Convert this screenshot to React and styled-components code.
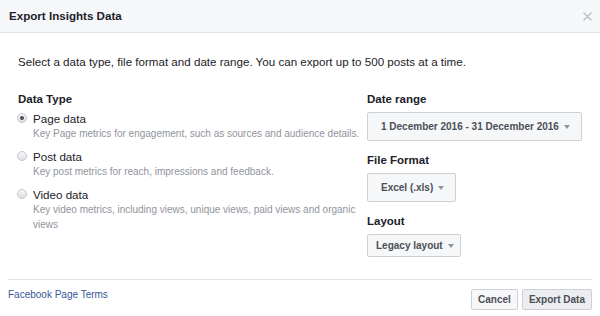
import React from "react";
import styled, { createGlobalStyle } from "styled-components";

const GlobalStyle = createGlobalStyle`
  html, body {
    margin: 0;
    padding: 0;
    background: #ffffff;
  }

  * {
    box-sizing: border-box;
  }
`;

const dataTypes = [
  {
    id: "page",
    label: "Page data",
    description: "Key Page metrics for engagement, such as sources and audience details.",
    checked: true,
  },
  {
    id: "post",
    label: "Post data",
    description: "Key post metrics for reach, impressions and feedback.",
  },
  {
    id: "video",
    label: "Video data",
    description:
      "Key video metrics, including views, unique views, paid views and organic views",
  },
];

function App() {
  return (
    <>
      <GlobalStyle />
      <Dialog>
        <Header>
          <Title>Export Insights Data</Title>
          <CloseButton aria-label="Close">
            <svg width="9" height="9" viewBox="0 0 9 9">
              <path
                d="M1 1 L8 8 M8 1 L1 8"
                stroke="#bec2c9"
                strokeWidth="1.6"
                strokeLinecap="round"
              />
            </svg>
          </CloseButton>
        </Header>

        <Body>
          <Intro>
            Select a data type, file format and date range. You can export up to
            500 posts at a time.
          </Intro>

          <Columns>
            <div>
              <Heading>Data Type</Heading>
              <Options>
                {dataTypes.map((type) => (
                  <Option key={type.id}>
                    <Radio checked={type.checked} />
                    <OptionLabel>{type.label}</OptionLabel>
                    <OptionDescription>{type.description}</OptionDescription>
                  </Option>
                ))}
              </Options>
            </div>

            <Settings>
              <Section>
                <Heading>Date range</Heading>
                <Select>
                  1 December 2016 - 31 December 2016
                  <Caret />
                </Select>
              </Section>
              <Section>
                <Heading>File Format</Heading>
                <Select>
                  Excel (.xls)
                  <Caret />
                </Select>
              </Section>
              <Section>
                <Heading>Layout</Heading>
                <Select compact>
                  Legacy layout
                  <Caret />
                </Select>
              </Section>
            </Settings>
          </Columns>
        </Body>

        <Footer>
          <TermsLink href="#">Facebook Page Terms</TermsLink>
          <Actions>
            <Button>Cancel</Button>
            <Button primary>Export Data</Button>
          </Actions>
        </Footer>
      </Dialog>
    </>
  );
}

export default App;

const Dialog = styled.div`
  display: flex;
  flex-direction: column;
  width: 600px;
  height: 316px;
  overflow: hidden;
  background: #ffffff;
  color: #1d2129;
  font-family: "Liberation Sans", Arial, Helvetica, sans-serif;
`;

const Header = styled.div`
  display: flex;
  align-items: center;
  justify-content: space-between;
  height: 33px;
  padding: 0 8px 0 9px;
  background: #f6f7f9;
  border-bottom: 1px solid #e5e5e5;
`;

const Title = styled.div`
  font-size: 11.6px;
  font-weight: bold;
  line-height: 16px;
`;

const CloseButton = styled.div`
  display: flex;
  width: 9px;
  height: 9px;
  margin-top: 1px;
  cursor: pointer;
`;

const Body = styled.div`
  padding: 21px 17px 0 18px;
`;

const Intro = styled.p`
  margin: 0;
  font-size: 11.6px;
  line-height: 16px;
`;

const Columns = styled.div`
  display: grid;
  grid-template-columns: 1fr 216px;
  margin-top: 21px;
`;

const Heading = styled.div`
  font-size: 11.5px;
  font-weight: bold;
  line-height: 16px;
`;

const Options = styled.div`
  display: flex;
  flex-direction: column;
  gap: 7.5px;
  margin-top: 3.5px;
`;

const Option = styled.label`
  display: grid;
  grid-template-columns: 15px 1fr;
  align-items: center;
  cursor: pointer;
`;

const Radio = styled.span`
  position: relative;
  width: 10px;
  height: 10px;
  margin-left: -1px;
  border: 1px solid #c4c7cc;
  border-radius: 50%;
  background: linear-gradient(#f7f8f9, #dcdee2);

  &::after {
    content: "";
    display: ${(props) => (props.checked ? "block" : "none")};
    position: absolute;
    top: 2px;
    left: 2px;
    width: 4px;
    height: 4px;
    border-radius: 50%;
    background: #4b4f56;
  }
`;

const OptionLabel = styled.span`
  font-size: 11.6px;
  line-height: 15px;
`;

const OptionDescription = styled.span`
  grid-column: 2;
  font-size: 10px;
  line-height: 15.5px;
  color: #90949c;
`;

const Settings = styled.div`
  display: flex;
  flex-direction: column;
`;

const Section = styled.div`
  display: flex;
  flex-direction: column;
  align-items: flex-start;

  & + & {
    margin-top: 11px;
  }
`;

const Select = styled.div`
  display: inline-flex;
  align-items: center;
  gap: 5px;
  height: ${(props) => (props.compact ? "23px" : "29px")};
  margin-top: 5px;
  padding: ${(props) => (props.compact ? "0 6px 0 8px" : "0 11px 0 13px")};
  background: #f6f7f9;
  border: 1px solid #ced0d4;
  border-radius: 2px;
  color: #4b4f56;
  font-size: 10px;
  font-weight: bold;
  white-space: nowrap;
  cursor: pointer;
`;

const Caret = styled.span`
  width: 0;
  height: 0;
  margin-top: 1px;
  border-left: 3.5px solid transparent;
  border-right: 3.5px solid transparent;
  border-top: 4px solid #90949c;
`;

const Footer = styled.div`
  display: flex;
  align-items: flex-start;
  justify-content: space-between;
  margin: 22px 8px 0;
  padding-top: 9px;
  border-top: 1px solid #e5e5e5;
`;

const TermsLink = styled.a`
  font-size: 10px;
  line-height: 12px;
  color: #365899;
  text-decoration: none;
`;

const Actions = styled.div`
  display: flex;
  gap: 4px;
`;

const Button = styled.button`
  height: 21px;
  padding: 0 6px;
  background: ${(props) => (props.primary ? "#ebedf0" : "#f6f7f9")};
  border: 1px solid #ced0d4;
  border-radius: 2px;
  color: #4b4f56;
  font-family: inherit;
  font-size: 10px;
  font-weight: bold;
  line-height: 19px;
  cursor: pointer;
`;
